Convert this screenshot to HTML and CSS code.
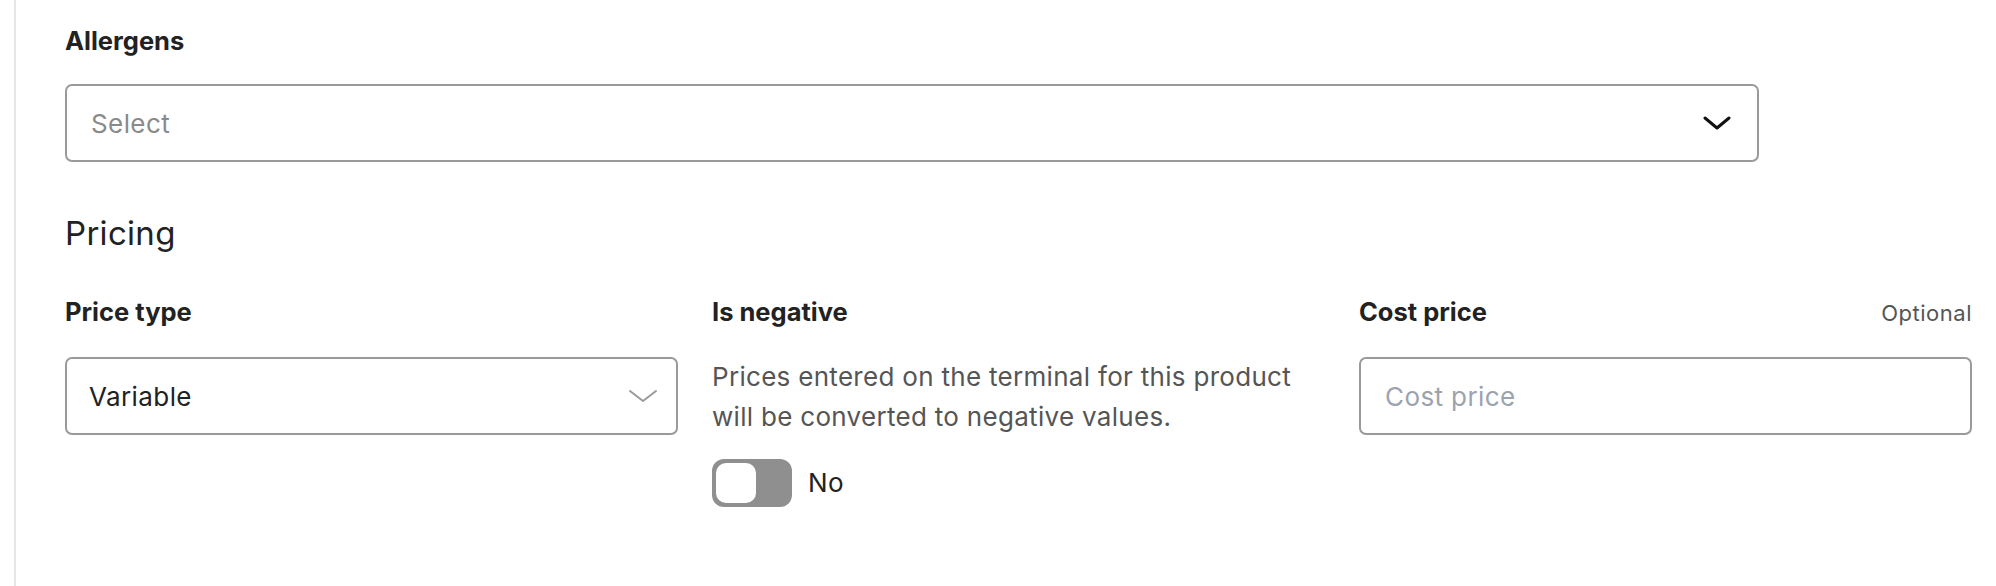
FILE: index.html
```html
<!DOCTYPE html>
<html lang="en">
<head>
<meta charset="utf-8">
<title>Product form</title>
<link rel="stylesheet" href="styles.css">
</head>
<body>
<div class="page">
  <div class="field allergens">
    <div class="label-row"><label class="label">Allergens</label></div>
    <div class="box select-box">
      <span class="placeholder">Select</span>
      <svg class="chev-bold" width="28" height="14" viewBox="0 0 28 14"><path d="M2 2 L14 12 L26 2" fill="none" stroke="#111" stroke-width="3" stroke-linecap="round" stroke-linejoin="round"/></svg>
    </div>
  </div>

  <h2 class="heading">Pricing</h2>

  <div class="grid">
    <div class="field">
      <div class="label-row"><label class="label">Price type</label></div>
      <div class="box native-select">
        <span class="value">Variable</span>
        <svg class="chev-light" width="30" height="14" viewBox="0 0 30 14"><path d="M2 2 L15 12 L28 2" fill="none" stroke="#9a9a9a" stroke-width="2" stroke-linecap="round" stroke-linejoin="round"/></svg>
      </div>
    </div>

    <div class="field">
      <div class="label-row"><label class="label">Is negative</label></div>
      <p class="desc">Prices entered on the terminal for this product will be converted to negative values.</p>
      <div class="toggle-row">
        <span class="toggle"><span class="knob"></span></span>
        <span class="toggle-text">No</span>
      </div>
    </div>

    <div class="field">
      <div class="label-row"><label class="label">Cost price</label><span class="optional">Optional</span></div>
      <div class="box input-box"><span class="placeholder-blue">Cost price</span></div>
    </div>
  </div>
</div>
</body>
</html>
```

FILE: styles.css
```css
html, body {
  margin: 0;
  padding: 0;
  background: #ffffff;
}
body {
  font-family: Inter, "Noto Sans", "Liberation Sans", sans-serif;
  color: #222222;
  height: 586px;
  overflow: hidden;
}
.page {
  margin-left: 14px;
  border-left: 2px solid #e6e6e6;
  padding: 27px 24px 0 49px;
  height: 586px;
  box-sizing: border-box;
}
.field {
  display: flex;
  flex-direction: column;
}
.label-row {
  display: flex;
  justify-content: space-between;
  align-items: baseline;
  height: 28px;
  overflow: visible;
  margin-bottom: 29px;
}
.label {
  font-size: 25.5px;
  line-height: 28px;
  font-weight: 700;
  color: #222222;
}
.optional {
  font-size: 22px;
  line-height: 28px;
  color: #555555;
  letter-spacing: 0.5px;
}
.box {
  box-sizing: border-box;
  height: 78px;
  border: 2px solid #9a9a9a;
  border-radius: 7px;
  display: flex;
  align-items: center;
  justify-content: space-between;
  font-size: 26px;
  letter-spacing: 0.4px;
}
.select-box {
  width: 1694px;
  padding: 0 26px 0 24px;
}
.placeholder {
  color: #8a8a8a;
}
.native-select {
  padding: 0 18px 0 22px;
}
.value {
  color: #222222;
}
.input-box {
  padding: 0 24px;
}
.placeholder-blue {
  color: #9ca3af;
}
.heading {
  margin: 51px 0 0 0;
  font-size: 33px;
  line-height: 40px;
  font-weight: 400;
  color: #222222;
  letter-spacing: 0.3px;
}
.grid {
  margin-top: 45px;
  display: grid;
  grid-template-columns: repeat(3, 613px);
  column-gap: 34px;
}
.grid .label-row {
  margin-bottom: 31px;
}
.desc {
  margin: 0;
  font-size: 26px;
  line-height: 40px;
  color: #555555;
  letter-spacing: 0.3px;
}
.toggle-row {
  margin-top: 22px;
  display: flex;
  align-items: center;
  gap: 16px;
}
.toggle {
  box-sizing: border-box;
  width: 80px;
  height: 48px;
  background: #8f8f8f;
  border-radius: 12px;
  padding: 4px;
  display: flex;
}
.knob {
  width: 40px;
  height: 40px;
  background: #ffffff;
  border-radius: 10px;
}
.toggle-text {
  font-size: 26px;
  line-height: 32px;
  color: #222222;
  letter-spacing: 0.5px;
}
```
